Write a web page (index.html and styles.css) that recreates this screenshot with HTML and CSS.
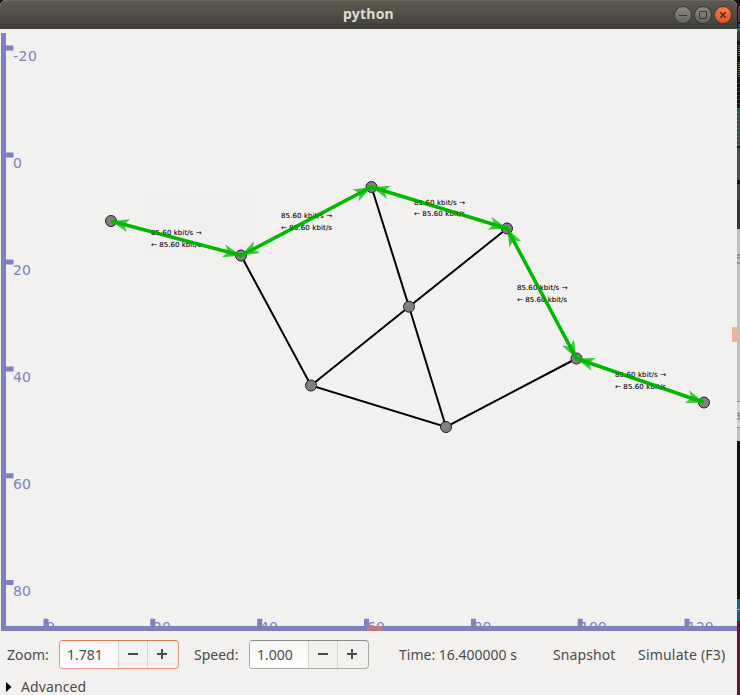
FILE: index.html
```html
<!DOCTYPE html>
<html lang="en">
<head>
<meta charset="utf-8">
<title>python</title>
<link rel="stylesheet" href="styles.css">
</head>
<body>
<div class="desktop">
<main class="window">
  <header class="titlebar">
    <span class="title">python</span>
    <svg class="controls" width="60" height="22" viewBox="0 0 60 22">
      <defs>
        <linearGradient id="grey" x2="0" y2="1"><stop stop-color="#8b8982"/><stop offset="1" stop-color="#65635d"/></linearGradient>
        <linearGradient id="orange" x2="0" y2="1"><stop stop-color="#f6804f"/><stop offset="1" stop-color="#e4501d"/></linearGradient>
      </defs>
      <g stroke="#37362f"><circle cx="10" cy="11" r="8.500" fill="url(#grey)"/><circle cx="30" cy="11" r="8.500" fill="url(#grey)"/><circle cx="50" cy="11" r="8.500" fill="url(#orange)"/></g>
      <path d="M6 11.500h8M26.500 7.500h7v7h-7z" fill="none" stroke="#3d3b36"/>
      <path d="M47.300 8.300l5.400 5.400m0-5.400l-5.400 5.400" stroke="#4a2b14" stroke-width="1.500"/>
    </svg>
  </header>
  <svg class="canvas" width="737" height="602" viewBox="0 29 737 602">
    <defs>
      <path id="head" d="M0 0L-18-6.700L-13.500 0L-18 6.700Z" fill="#00b800" fill-opacity=".74"/>
    </defs>
    <path class="axis" d="M3.500 33V631M1 628.500H737M5 48H13.500M5 155H13.500M5 262H13.500M5 369H13.500M5 475.700H13.500M5 582.500H13.500M46 628V618.700M152.800 628V618.700M259.700 628V618.700M366.500 628V618.700M473.400 628V618.700M580.200 628V618.700M687 628V618.700"/>
    <g class="scale">
      <text x="13" y="61" textLength="24">-20</text><text x="13" y="168">0</text><text x="13" y="275">20</text><text x="13" y="382">40</text><text x="13" y="489">60</text><text x="13" y="595.500">80</text>
      <text x="46" y="632.300">0</text><text x="153" y="632.300">20</text><text x="260" y="632.300">40</text><text x="367" y="632.300">60</text><text x="473.500" y="632.300">80</text><text x="580" y="632.300">100</text><text x="687" y="632.300">120</text>
    </g>
    <path d="M367 626h15v5h-15z" fill="#bd7b83"/>
    <path d="M732 327h5v15h-5z" fill="#f3b198"/>
    <path class="link" d="M241 255.500L311 385.500L446 427L576.500 358.500M311 385.500L409 306.700L507 228.500M371.500 187L409 306.700L446 427"/>
    <g class="node"><circle cx="111" cy="221" r="5.500"/><circle cx="241" cy="255.500" r="5.500"/><circle cx="371.500" cy="187" r="5.500"/><circle cx="507" cy="228.500" r="5.500"/><circle cx="576.500" cy="358.500" r="5.500"/><circle cx="704" cy="402.500" r="5.500"/><circle cx="409" cy="306.700" r="5.500"/><circle cx="311" cy="385.500" r="5.500"/><circle cx="446" cy="427" r="5.500"/></g>
    <g class="rate" id="rates">
      <text x="151" y="235" textLength="50.500">85.60 kbit/s →</text><text x="151" y="247" textLength="50">← 85.60 kbit/s</text>
      <text x="281" y="218" textLength="51">85.60 kbit/s →</text><text x="281" y="230" textLength="51">← 85.60 kbit/s</text>
      <text x="414" y="205" textLength="51">85.60 kbit/s →</text><text x="414" y="216" textLength="51">← 85.60 kbit/s</text>
      <text x="517" y="290" textLength="50.500">85.60 kbit/s →</text><text x="517" y="302" textLength="50">← 85.60 kbit/s</text>
      <text x="615" y="377" textLength="51">85.60 kbit/s →</text><text x="615" y="389" textLength="51">← 85.60 kbit/s</text>
    </g>
    <path class="flow" d="M111 221L241 255.500L371.500 187L507 228.500L576.500 358.500L704 402.500"/>
    <use href="#rates" opacity=".4"/>
    <g>
      <use href="#head" transform="translate(111 221) rotate(194.900)"/><use href="#head" transform="translate(241 255.500) rotate(14.900)"/>
      <use href="#head" transform="translate(241 255.500) rotate(152.300)"/><use href="#head" transform="translate(371.500 187) rotate(-27.700)"/>
      <use href="#head" transform="translate(371.500 187) rotate(197)"/><use href="#head" transform="translate(507 228.500) rotate(17)"/>
      <use href="#head" transform="translate(507 228.500) rotate(241.900)"/><use href="#head" transform="translate(576.500 358.500) rotate(61.900)"/>
      <use href="#head" transform="translate(576.500 358.500) rotate(199)"/><use href="#head" transform="translate(704 402.500) rotate(19)"/>
    </g>
  </svg>
  <div class="toolbar">
    <span class="label zoom">Zoom:</span>
    <div class="spin focused"><span class="value">1.781</span><i class="step minus"></i><i class="step plus"></i></div>
    <span class="label speed">Speed:</span>
    <div class="spin"><span class="value">1.000</span><i class="step minus"></i><i class="step plus"></i></div>
    <span class="label time">Time: 16.400000 s</span>
    <span class="label snapshot">Snapshot</span>
    <span class="label simulate">Simulate (F3)</span>
  </div>
  <div class="expander"><svg width="6" height="10" viewBox="0 0 6 10"><path d="M0 0L5.500 5L0 10Z"/></svg><span>Advanced</span></div>
</main>
<svg class="behind" width="3" height="695" viewBox="0 0 3 695">
  <path d="M0 0h3v200H0z" fill="#151515"/>
  <path d="M1 6h2v16H1z" fill="#553454"/><path d="M1 24h2v3H1z" fill="#17517c"/><path d="M0 28h3v4H0z" fill="#55554c"/>
  <path d="M1.500 32v9" stroke="#444b58" stroke-width="2"/><path d="M2 45v12M2 62v16" stroke="#66664f" stroke-width="2" stroke-dasharray="1 1"/>
  <path d="M1.500 83v23" stroke="#275a4c" stroke-width="2" stroke-dasharray="1 3"/>
  <path d="M0 108h3v38H0z" fill="#3e4b48"/><path d="M1.500 108v38" stroke="#408370" stroke-width="2" stroke-dasharray="1 3"/>
  <path d="M0 148h3v32H0z" fill="#4c4d4e"/><path d="M0 184h3v16H0z" fill="#45464a"/><path d="M0 200h3v29H0z" fill="#363632"/>
  <path d="M0 229h3v212H0z" fill="#c1c0bf"/><path d="M0 255h3m-3 3h3m-3 5h3" stroke="#62676d"/>
  <path d="M0 402h3v25H0z" fill="#d3d2d1"/><path d="M0 401.500h3m-3 26h3" stroke="#8c8c8c"/><path d="M3 413H1v3h2v3H0" fill="none" stroke="#777"/>
  <path d="M0 441h3v158H0z" fill="#141414"/><path d="M0 599h3v22H0z" fill="#0864a1"/><path d="M0 609.500h3" stroke="#8db6d3"/><path d="M0 621h3v74H0z" fill="#6b0f35"/>
</svg>
</div>
</body>
</html>
```
FILE: styles.css
```css
* { box-sizing: border-box; }
body { margin: 0; background: #220919; }
.desktop { display: flex; width: 740px; height: 695px; overflow: hidden; }
.window { width: 737px; height: 695px; background: #f2f1ef; color: #4c4c4c; font: 14px/20px "Noto Sans", "Open Sans", sans-serif; border-radius: 6px 6px 0 0; overflow: hidden; }
.titlebar { display: grid; grid-template-columns: 60px 1fr 60px; align-items: center; height: 29px; padding: 0 4px; background: linear-gradient(#5d5b50, #3f3e39); border-top: 1px solid #6b695b; }
.controls { margin-top: -1px; }
.title { grid-column: 2; text-align: center; color: #dfdbd2; font-weight: 700; font-size: 14px; letter-spacing: .2px; padding-bottom: 2px; }
.canvas { display: block; }
.axis { fill: none; stroke: #8080c0; stroke-width: 5; }
.scale { fill: #8080c0; font: 14px "DejaVu Sans", sans-serif; }
.link { fill: none; stroke: #000; stroke-width: 2; }
.node { fill: #808080; stroke: #202020; stroke-width: 1; }
.rate { fill: #101018; font: 7px "DejaVu Sans", sans-serif; }
.flow { fill: none; stroke: #00b800; stroke-width: 3.5; }
.toolbar { display: flex; align-items: center; height: 47px; padding-left: 7px; }
.label { flex: none; white-space: nowrap; }
.zoom { width: 52px; }
.speed { width: 55px; margin-left: 15px; }
.time { width: 154px; margin-left: 30px; }
.snapshot { width: 85px; letter-spacing: .1px; }
.simulate { letter-spacing: .2px; }
.spin { display: flex; width: 120px; height: 29px; border: 1px solid #aaa8a5; border-top-color: #8e8d8a; border-radius: 4px; background: #f2f1ef; overflow: hidden; }
.spin.focused { border-color: #e5997b; border-top-color: #dd7b56; }
.value { width: 58px; padding: 4px 0 0 7px; background: linear-gradient(#f6f6f5, #fff); }
.step { position: relative; width: 29px; border-left: 1px solid #d7d5d2; }
.step::before, .plus::after { content: ""; position: absolute; background: #4c4c4c; left: 9px; top: 12px; width: 10px; height: 2px; }
.plus::after { left: 13px; top: 8px; width: 2px; height: 10px; }
.expander { display: flex; align-items: center; height: 17px; padding-left: 6px; gap: 9px; letter-spacing: .1px; }
```
